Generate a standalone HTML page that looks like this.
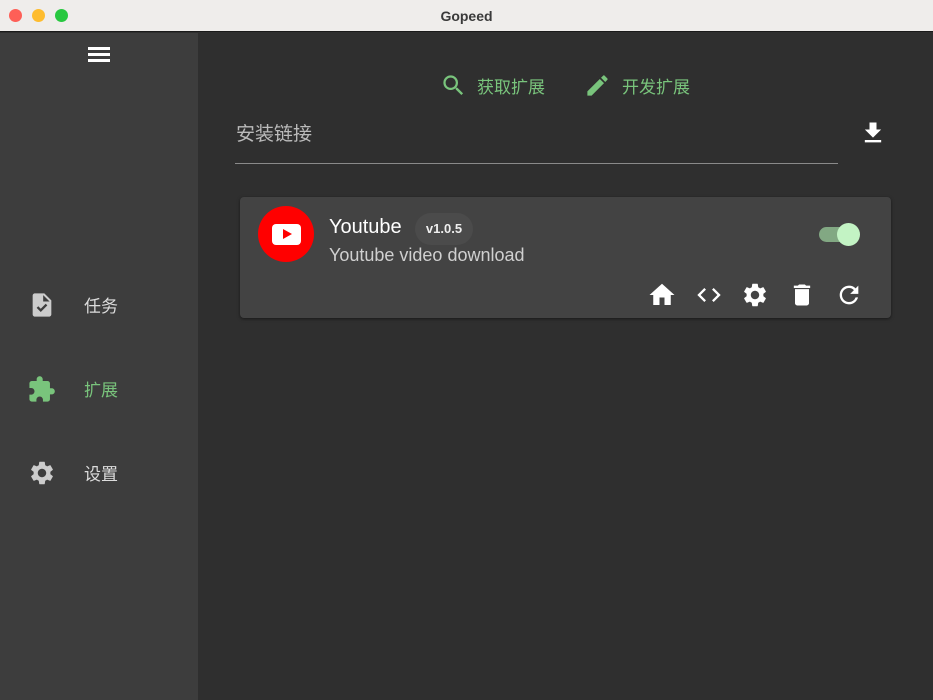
<!DOCTYPE html>
<html><head><meta charset="utf-8"><style>
*{margin:0;padding:0;box-sizing:border-box}
body{width:933px;height:700px;overflow:hidden;background:#2f2f2f;font-family:"Liberation Sans","Noto Sans CJK SC",sans-serif;position:relative}
.tb{position:absolute;left:0;top:0;width:933px;height:32px;background:#efedeb;border-bottom:1px solid #1a1a1a;text-align:center;font:bold 14px/32px "Liberation Sans",sans-serif;color:#3a3a3a}
.dot{position:absolute;top:9px;width:13px;height:13px;border-radius:50%}
.side{position:absolute;left:0;top:33px;width:198px;height:667px;background:#3d3d3d}
.abs{position:absolute}
.nav{position:absolute;left:84px;font-size:17px;color:#ddd}
svg{position:absolute}
.card{position:absolute;left:240px;top:197px;width:651px;height:121px;background:#434343;border-radius:4px;box-shadow:0 1px 3px rgba(0,0,0,.5)}
</style></head><body>
<div class="tb">Gopeed
<div class="dot" style="left:9px;background:#fe5f57"></div>
<div class="dot" style="left:32px;background:#febc2e"></div>
<div class="dot" style="left:55px;background:#28c840"></div>
</div>
<div class="side">
<div class="abs" style="left:88px;top:14px;width:22px;height:3px;background:#fff"></div>
<div class="abs" style="left:88px;top:20px;width:22px;height:3px;background:#fff"></div>
<div class="abs" style="left:88px;top:26px;width:22px;height:3px;background:#fff"></div>
<svg style="left:28px;top:258px" width="28" height="28" viewBox="0 0 24 24"><path fill="#ccc" d="M14 2H6c-1.1 0-2 .9-2 2v16c0 1.1.9 2 2 2h12c1.1 0 2-.9 2-2V8l-6-6zm-3.06 16L7.4 14.46l1.41-1.41 2.12 2.12 4.24-4.24 1.41 1.41L10.94 18zM13 9V3.5L18.5 9H13z"/></svg>
<div class="nav" style="top:259px">任务</div>
<svg style="left:27px;top:342px" width="29" height="29" viewBox="0 0 24 24"><path fill="#79c47c" d="M20.5 11H19V7c0-1.1-.9-2-2-2h-4V3.5C13 2.120 11.88 1 10.5 1S8 2.12 8 3.5V5H4c-1.1 0-1.99.9-1.99 2v3.8H3.5c1.49 0 2.7 1.21 2.7 2.7s-1.21 2.7-2.7 2.7H2V20c0 1.1.9 2 2 2h3.8v-1.5c0-1.49 1.21-2.7 2.7-2.7 1.49 0 2.7 1.21 2.7 2.7V22H17c1.1 0 2-.9 2-2v-4h1.5c1.38 0 2.5-1.12 2.5-2.5S21.88 11 20.5 11z"/></svg>
<div class="nav" style="top:343px;color:#79c47c">扩展</div>
<svg style="left:28px;top:426px" width="28" height="28" viewBox="0 0 24 24"><path fill="#ccc" d="M19.14 12.94c.04-.3.06-.61.06-.94 0-.32-.02-.64-.07-.94l2.03-1.58a.49.49 0 00.12-.61l-1.92-3.32a.488.488 0 00-.59-.22l-2.39.96c-.5-.38-1.030-.7-1.62-.94l-.36-2.54a.484.484 0 00-.48-.41h-3.84c-.24 0-.43.17-.47.41l-.36 2.54c-.59.24-1.13.57-1.62.94l-2.39-.96c-.22-.08-.47 0-.59.22L2.74 8.87c-.12.21-.08.47.12.61l2.03 1.58c-.05.3-.09.63-.09.94s.02.64.07.94l-2.03 1.58a.49.49 0 00-.12.61l1.92 3.32c.12.22.37.29.59.22l2.39-.96c.5.38 1.03.7 1.62.94l.36 2.54c.05.24.24.41.48.41h3.84c.24 0 .44-.17.47-.41l.36-2.54c.59-.24 1.13-.56 1.62-.94l2.39.96c.22.08.47 0 .59-.22l1.92-3.32c.12-.22.07-.47-.12-.61l-2.01-1.58zM12 15.6c-1.98 0-3.6-1.62-3.6-3.6s1.62-3.6 3.6-3.6 3.6 1.62 3.6 3.6-1.62 3.6-3.6 3.6z"/></svg>
<div class="nav" style="top:427px">设置</div>
</div>
<svg style="left:440px;top:72px" width="27" height="27" viewBox="0 0 24 24"><path fill="#79c47c" d="M15.5 14h-.79l-.28-.27A6.47 6.47 0 0016 9.5 6.5 6.5 0 109.5 16c1.61 0 3.090-.59 4.23-1.57l.27.28v.79l5 4.99L20.49 19l-4.99-5zm-6 0C7.01 14 5 11.99 5 9.5S7.01 5 9.5 5 14 7.01 14 9.5 11.99 14 9.5 14z"/></svg>
<div class="abs" style="left:477px;top:73px;font-size:17px;color:#79c47c">获取扩展</div>
<svg style="left:584px;top:72px" width="27" height="27" viewBox="0 0 24 24"><path fill="#79c47c" d="M3 17.25V21h3.75L17.81 9.94l-3.75-3.75L3 17.25zM20.71 7.04a1 1 0 000-1.41l-2.34-2.34a1 1 0 00-1.41 0l-1.83 1.83 3.75 3.75 1.83-1.83z"/></svg>
<div class="abs" style="left:622px;top:73px;font-size:17px;color:#79c47c">开发扩展</div>
<div class="abs" style="left:236px;top:119px;font-size:19px;color:#bbb">安装链接</div>
<div class="abs" style="left:235px;top:163px;width:603px;height:1px;background:#8a8a8a"></div>
<svg style="left:859px;top:119px" width="28" height="28" viewBox="0 0 24 24"><path fill="#fff" d="M19 9h-4V3H9v6H5l7 7 7-7zM5 18v2h14v-2H5z"/></svg>
<div class="card">
<div class="abs" style="left:18px;top:9px;width:56px;height:56px;border-radius:50%;background:#f00"></div>
<div class="abs" style="left:32px;top:27px;width:29px;height:21px;border-radius:4px;background:#fff"></div>
<div class="abs" style="left:43px;top:32px;width:0;height:0;border-left:9px solid #f00;border-top:5.5px solid transparent;border-bottom:5.5px solid transparent"></div>
<div class="abs" style="left:89px;top:19px;font-size:20px;color:#fff">Youtube</div>
<div class="abs" style="left:175px;top:16px;width:58px;height:32px;border-radius:16px;background:#4b4b4b;color:#eee;font:bold 13px/32px 'Liberation Sans',sans-serif;text-align:center">v1.0.5</div>
<div class="abs" style="left:89px;top:48px;font-size:18px;color:#d0d0d0">Youtube video download</div>
<div class="abs" style="left:579px;top:30px;width:34px;height:15px;border-radius:8px;background:#82a883"></div>
<div class="abs" style="left:597px;top:26px;width:23px;height:23px;border-radius:50%;background:#c3f3c4"></div>
<svg style="left:407px;top:83px" width="30" height="30" viewBox="0 0 24 24"><path fill="#fff" d="M10 20v-6h4v6h5v-8h3L12 3 2 12h3v8z"/></svg>
<svg style="left:455px;top:84px" width="28" height="28" viewBox="0 0 24 24"><path fill="#fff" d="M9.4 16.6L4.8 12l4.6-4.6L8 6l-6 6 6 6 1.4-1.4zm5.2 0l4.6-4.6-4.6-4.6L16 6l6 6-6 6-1.4-1.4z"/></svg>
<svg style="left:501px;top:84px" width="28" height="28" viewBox="0 0 24 24"><path fill="#fff" d="M19.14 12.94c.04-.3.06-.61.06-.94 0-.32-.02-.64-.07-.94l2.03-1.58a.49.49 0 00.12-.61l-1.92-3.32a.488.488 0 00-.59-.22l-2.39.96c-.5-.38-1.03-.7-1.62-.94l-.36-2.54a.484.484 0 00-.48-.41h-3.84c-.24 0-.43.17-.47.41l-.36 2.54c-.59.24-1.13.57-1.62.94l-2.39-.96c-.22-.08-.47 0-.59.22L2.74 8.87c-.12.21-.08.47.12.61l2.03 1.58c-.05.3-.09.63-.09.94s.02.64.07.94l-2.03 1.58a.49.49 0 00-.12.61l1.92 3.32c.12.22.37.29.59.22l2.39-.96c.5.38 1.03.7 1.62.94l.36 2.54c.05.24.24.41.48.41h3.84c.24 0 .44-.17.47-.41l.36-2.54c.59-.24 1.13-.56 1.62-.94l2.39.96c.22.08.47 0 .59-.22l1.92-3.32c.12-.22.07-.47-.12-.61l-2.01-1.58zM12 15.6c-1.98 0-3.6-1.62-3.6-3.6s1.62-3.6 3.6-3.6 3.6 1.62 3.6 3.6-1.62 3.6-3.6 3.6z"/></svg>
<svg style="left:548px;top:84px" width="28" height="28" viewBox="0 0 24 24"><path fill="#fff" d="M6 19c0 1.1.9 2 2 2h8c1.1 0 2-.9 2-2V7H6v12zM19 4h-3.5l-1-1h-5l-1 1H5v2h14V4z"/></svg>
<svg style="left:595px;top:84px" width="28" height="28" viewBox="0 0 24 24"><path fill="#fff" d="M17.65 6.35A7.958 7.958 0 0012 4c-4.42 0-7.99 3.58-7.99 8s3.57 8 7.99 8c3.73 0 6.84-2.55 7.73-6h-2.08A5.99 5.99 0 0112 18c-3.31 0-6-2.69-6-6s2.69-6 6-6c1.66 0 3.14.69 4.22 1.78L13 11h7V4l-2.35 2.35z"/></svg>
</div>
</body></html>
